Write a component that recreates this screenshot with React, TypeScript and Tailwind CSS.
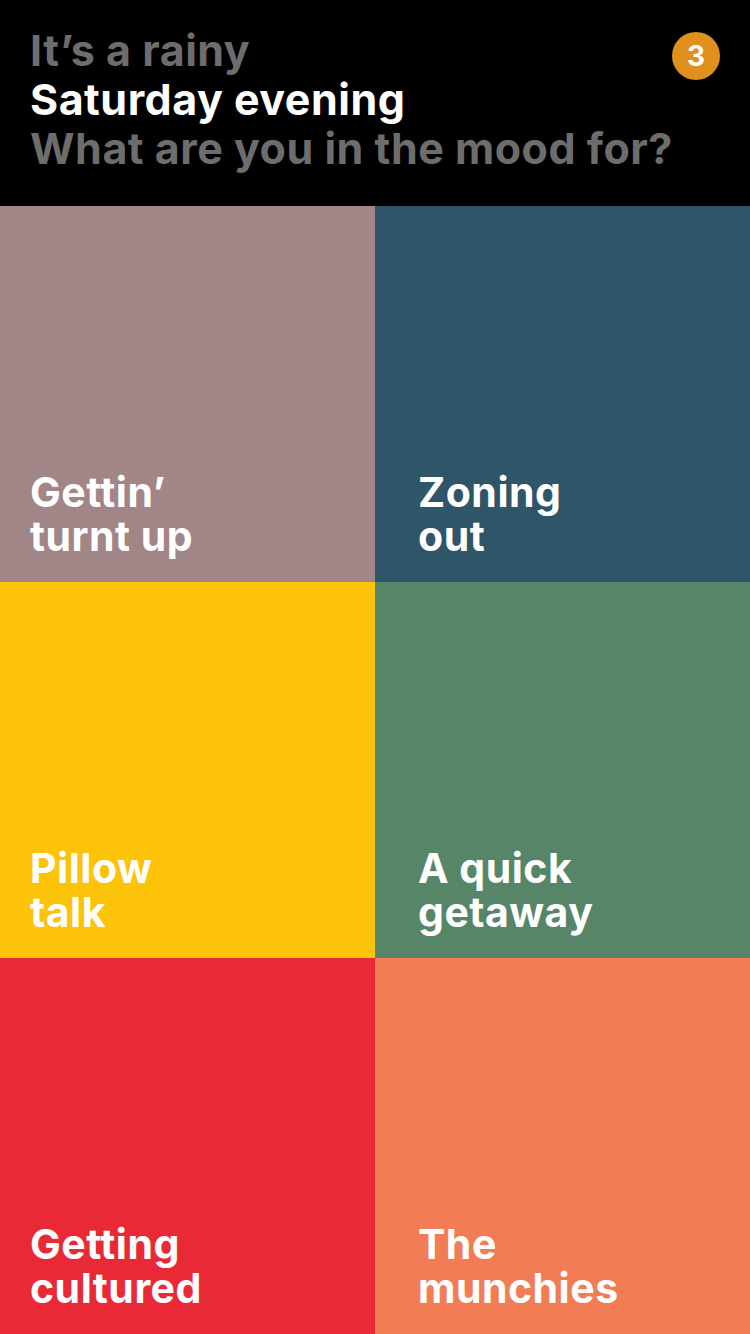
const tiles = [
  { label: ["Gettin’", "turnt up"], bg: "bg-[#a28586]", pad: "pl-[30px]" },
  { label: ["Zoning", "out"], bg: "bg-[#2f5568]", pad: "pl-[43px]" },
  { label: ["Pillow", "talk"], bg: "bg-[#fcc309]", pad: "pl-[30px]" },
  { label: ["A quick", "getaway"], bg: "bg-[#568667]", pad: "pl-[43px]" },
  { label: ["Getting", "cultured"], bg: "bg-[#e92a36]", pad: "pl-[30px]" },
  { label: ["The", "munchies"], bg: "bg-[#f27d55]", pad: "pl-[43px]" },
]

export default function App() {
  return (
    <div className="w-[750px] h-[1334px] flex flex-col bg-black font-['Inter',sans-serif] font-bold">
      {/* Header */}
      <header className="h-[206px] shrink-0 flex justify-between pl-[30px] pr-[30px] pt-[26px]">
        <div className="min-w-0 whitespace-nowrap text-[43px] leading-[49px] tracking-[0.5px]">
          <p className="text-[#6d6d6d]">It’s a rainy</p>
          <p className="text-white">Saturday evening</p>
          <p className="text-[#6d6d6d]">What are you in the mood for?</p>
        </div>
        <div className="mt-[6px] w-12 h-12 shrink-0 rounded-full bg-[#e0901d] flex items-center justify-center text-white text-[28px] leading-none">
          3
        </div>
      </header>

      {/* Mood grid */}
      <div className="flex-1 grid grid-cols-[375px_375px] grid-rows-3">
        {tiles.map((t) => (
          <div
            key={t.label.join(" ")}
            className={`${t.bg} ${t.pad} flex flex-col justify-end pb-[24px]`}
          >
            <p className="text-white text-[41px] leading-[44px] tracking-[0.5px]">
              {t.label[0]}
              <br />
              {t.label[1]}
            </p>
          </div>
        ))}
      </div>
    </div>
  )
}
